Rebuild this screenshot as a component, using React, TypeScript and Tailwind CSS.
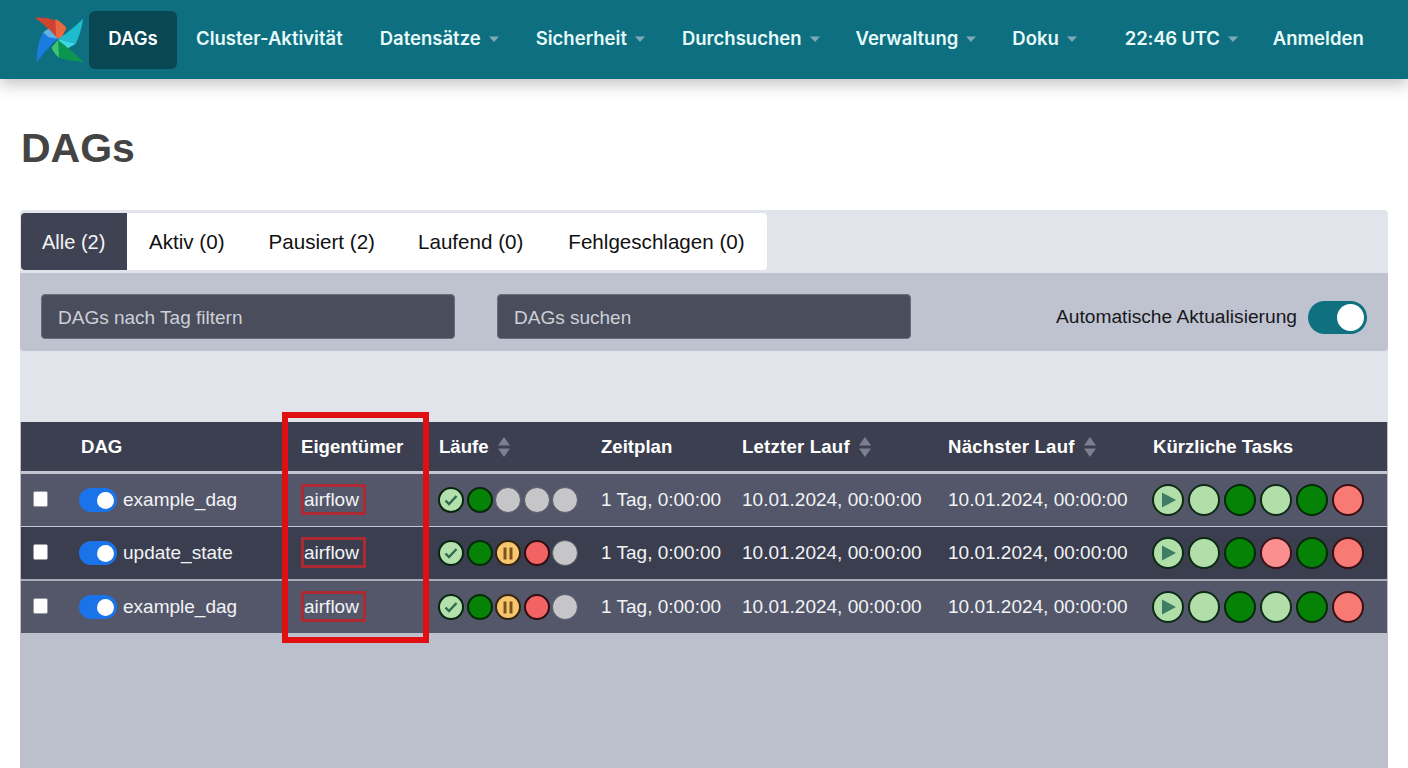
import React from "react";

const sans = "font-['Liberation_Sans',Arial,sans-serif]";

function Caret() {
  return (
    <svg width="12" height="7" viewBox="0 0 12 7" className="ml-[7px] mt-[2px] shrink-0">
      <path d="M1 0.5h10L6 6z" fill="#7fa9b5" />
    </svg>
  );
}

function Logo() {
  return (
    <svg width="52" height="52" viewBox="0 0 56 56" className="shrink-0">
      <path d="M2 4 C14 3 27 6 36 15 L30 27 L24 25 Q14 12 2 4z" fill="#cf4430" />
      <path d="M24 5 C29 8 33 11 36 15 L30 27 L25 25z" fill="#e8683f" />
      <path d="M54 5 C52 16 50 24 46 32 L27 27 Q38 20 54 5z" fill="#1fbccd" />
      <path d="M46 32 L32 40 L27 27z" fill="#3fd6e4" />
      <path d="M55 52 C44 50 35 50 27 46 L20 36 L27 28 Q40 38 55 52z" fill="#0b9650" />
      <path d="M20 36 L27 28 L28 47 Q22 42 20 36z" fill="#3cc474" />
      <path d="M4 52 C4 40 6 28 11 20 L26 27 Q16 36 4 52z" fill="#1a7be0" />
      <path d="M11 20 Q14 17 17 16 L27 27 L17 25z" fill="#62b0e0" />
    </svg>
  );
}

function NavItem({ label, caret, className = "" }: { label: string; caret?: boolean; className?: string }) {
  return (
    <div className={`flex items-center shrink-0 h-[58px] pb-[2px] text-[18.5px] font-semibold text-[#e6fafa] whitespace-nowrap ${className}`}>
      {label}
      {caret && <Caret />}
    </div>
  );
}

function SortIcon() {
  return (
    <svg width="14" height="22" viewBox="0 0 14 22" className="ml-[8px] shrink-0">
      <path d="M7 1l6 8.5H1z" fill="#7b7f8f" />
      <path d="M7 21l6-8.5H1z" fill="#7b7f8f" />
    </svg>
  );
}

type DotKind = "ok" | "green" | "pale" | "gray" | "pause" | "red" | "pink" | "play" | "redT";

function Dot({ kind, size }: { kind: DotKind; size: "run" | "task" }) {
  const dim = size === "run" ? "w-[26px] h-[26px]" : "w-[32px] h-[32px]";
  const styles: Record<DotKind, string> = {
    ok: "bg-[#b3e0ad] border-[#07260f] border-2",
    green: "bg-[#068206] border-[#04290a] border-2",
    pale: "bg-[#b2dfa9] border-[#0c2a14] border-2",
    gray: "bg-[#c6c6c8] border-[#5a5d6c] border",
    pause: "bg-[#f9c66f] border-[#33240f] border-2",
    red: "bg-[#f26464] border-[#2f0d12] border-2",
    pink: "bg-[#fb8f8f] border-[#3a1218] border-2",
    redT: "bg-[#f77a74] border-[#3a0f12] border-2",
    play: "bg-[#b2dfa9] border-[#0c2a14] border-2",
  };
  return (
    <div className={`${dim} ${styles[kind]} rounded-full flex items-center justify-center shrink-0`}>
      {kind === "ok" && (
        <svg width="14" height="12" viewBox="0 0 14 12">
          <path d="M1.5 6.5L5 10l7.5-8" fill="none" stroke="#2f6b4a" strokeWidth="2.4" />
        </svg>
      )}
      {kind === "pause" && (
        <svg width="12" height="13" viewBox="0 0 12 13">
          <rect x="1.5" y="0.5" width="3" height="12" fill="#7a5518" />
          <rect x="7.5" y="0.5" width="3" height="12" fill="#7a5518" />
        </svg>
      )}
      {kind === "play" && (
        <svg width="16" height="18" viewBox="0 0 16 18" className="ml-[2px]">
          <path d="M1 1.5L15 9 1 16.5z" fill="#3e7c66" />
        </svg>
      )}
    </div>
  );
}

const COLS = "grid grid-cols-[60px_220px_138px_162px_141px_206px_205px_234px] items-center";

function Row({ name, runs, tasks, bg, h }: { name: string; runs: DotKind[]; tasks: DotKind[]; bg: string; h: string }) {
  return (
    <div className={`${COLS} ${bg} ${h} text-[19px] text-[#f2f3f5] whitespace-nowrap`}>
      <div className="flex pl-[12px] mt-[-2px]">
        <div className="w-[15px] h-[16px] bg-white rounded-[2px] border border-[#9a9aa0]" />
      </div>
      <div className="flex items-center">
        <div className="ml-[-2px] w-[38px] h-[24px] rounded-full bg-[#1a73e8] flex items-center justify-end pr-[3px]">
          <div className="w-[17px] h-[17px] rounded-full bg-white" />
        </div>
        <span className="ml-[6px]">{name}</span>
      </div>
      <div className="mt-[-1px]">
        <span className="inline-block pl-[0px] pr-[4px] leading-[25px] border-[3px] border-[#ad2a32]">airflow</span>
      </div>
      <div className="flex gap-[2.5px] ml-[-1px]">
        {runs.map((k, i) => (
          <Dot key={i} kind={k} size="run" />
        ))}
      </div>
      <div>1 Tag, 0:00:00</div>
      <div>10.01.2024, 00:00:00</div>
      <div>10.01.2024, 00:00:00</div>
      <div className="flex gap-[4px] ml-[-1px]">
        {tasks.map((k, i) => (
          <Dot key={i} kind={k} size="task" />
        ))}
      </div>
    </div>
  );
}

export default function App() {
  return (
    <div className="h-screen overflow-hidden bg-white flex flex-col font-['Inter',sans-serif]">
      <nav className="h-[79px] shrink-0 bg-[#0e6f80] shadow-[0_6px_14px_rgba(0,0,0,0.22)] flex items-center pl-[33px] relative z-10">
        <Logo />
        <div className="ml-[4px] shrink-0 w-[88px] h-[58px] pb-[2px] rounded-[6px] bg-[#0a4755] flex items-center justify-center text-[18.5px] font-semibold text-white">
          DAGs
        </div>
        <NavItem label="Cluster-Aktivität" className="ml-[19px]" />
        <NavItem label="Datensätze" caret className="ml-[37px]" />
        <NavItem label="Sicherheit" caret className="ml-[36px]" />
        <NavItem label="Durchsuchen" caret className="ml-[36px]" />
        <NavItem label="Verwaltung" caret className="ml-[35px]" />
        <NavItem label="Doku" caret className="ml-[35px]" />
        <NavItem label="22:46 UTC" caret className="ml-[47px] tracking-[-0.2px]" />
        <NavItem label="Anmelden" className="ml-[34px]" />
      </nav>

      <h1 className={`${sans} ml-[21px] mt-[44px] h-[50px] leading-[50px] text-[41px] font-bold text-[#444444]`}>DAGs</h1>

      <main className={`${sans} mt-[37px] mx-[20px] flex-1 flex flex-col bg-[#e1e4ea] rounded-t-[4px] pt-[3px] overflow-hidden`}>
        <div className="ml-[1px] flex w-[746px] h-[57px] pt-[1px] bg-white rounded-[4px] overflow-hidden text-[20.6px] text-[#111111] items-stretch whitespace-nowrap">
          <div className="bg-[#3f4253] text-[#f3f4f6] text-[20px] w-[106px] mt-[-1px] pl-[21px] flex items-center">Alle (2)</div>
          <div className="pl-[22px] flex items-center">Aktiv (0)</div>
          <div className="pl-[44px] flex items-center">Pausiert (2)</div>
          <div className="pl-[43px] flex items-center">Laufend (0)</div>
          <div className="pl-[45px] flex items-center">Fehlgeschlagen (0)</div>
        </div>

        <div className="mt-[3px] h-[78px] pt-[9px] bg-[#bfc3cf] rounded-b-[4px] flex items-center pl-[21px] pr-[21px] shrink-0">
          <input
            readOnly
            placeholder="DAGs nach Tag filtern"
            className="w-[414px] h-[45px] rounded-[4px] bg-[#4a4d5c] border border-[#6a6d7c] px-[16px] pt-[2px] text-[19px] placeholder:text-[#cdd0d7] outline-none"
          />
          <input
            readOnly
            placeholder="DAGs suchen"
            className="ml-[42px] w-[414px] h-[45px] rounded-[4px] bg-[#4a4d5c] border border-[#6a6d7c] px-[16px] pt-[2px] text-[19px] placeholder:text-[#cdd0d7] outline-none"
          />
          <span className="ml-auto pt-[2px] text-[19.2px] text-[#17181c] whitespace-nowrap">Automatische Aktualisierung</span>
          <div className="ml-[11px] mt-[1px] w-[59px] h-[33px] rounded-full bg-[#0f7080] flex items-center justify-end pr-[3px] shrink-0">
            <div className="w-[27px] h-[27px] rounded-full bg-white" />
          </div>
        </div>

        <div className="h-[71px] shrink-0" />

        <div className="flex-1 bg-[#bcc0cc]">
          <div className="relative mx-[1px]">
            <div className={`${COLS} h-[49px] pt-[1px] bg-[#3c3f50] text-[18.6px] font-bold text-white whitespace-nowrap`}>
              <div />
              <div>DAG</div>
              <div>Eigentümer</div>
              <div className="flex items-center">Läufe<SortIcon /></div>
              <div>Zeitplan</div>
              <div className="flex items-center tracking-[0.2px]">Letzter Lauf<SortIcon /></div>
              <div className="flex items-center tracking-[0.2px]">Nächster Lauf<SortIcon /></div>
              <div>Kürzliche Tasks</div>
            </div>
            <div className="h-[3px] bg-[#c3c6d0]" />
            <Row h="h-[52px]" bg="bg-[#54576a]" name="example_dag" runs={["ok", "green", "gray", "gray", "gray"]} tasks={["play", "pale", "green", "pale", "green", "redT"]} />
            <div className="h-[1px] bg-[#c3c6d0]" />
            <Row h="h-[52px]" bg="bg-[#3b3e4f]" name="update_state" runs={["ok", "green", "pause", "red", "gray"]} tasks={["play", "pale", "green", "pink", "green", "redT"]} />
            <div className="h-[2px] bg-[#a9adba]" />
            <Row h="h-[52px]" bg="bg-[#54576a]" name="example_dag" runs={["ok", "green", "pause", "red", "gray"]} tasks={["play", "pale", "green", "pale", "green", "redT"]} />
            <div className="absolute left-[261px] top-[-10px] w-[147px] h-[231px] border-[6px] border-[#e00f12] pointer-events-none" />
          </div>
        </div>
      </main>
    </div>
  );
}
